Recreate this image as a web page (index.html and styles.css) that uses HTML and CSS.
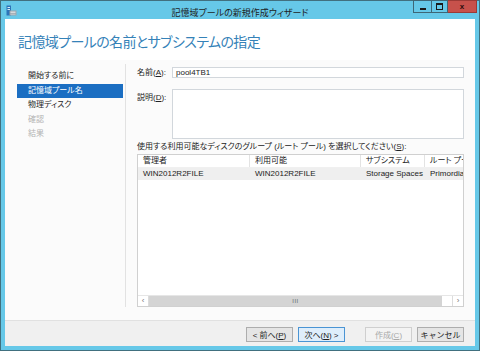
FILE: index.html
```html
<!DOCTYPE html>
<html lang="ja">
  <head>
    <meta charset="UTF-8">
    <title>記憶域プールの新規作成ウィザード</title>
    <link rel="stylesheet" href="styles.css">
  </head>
  <body>
  <div class="window">
    <div class="titlebar">
      <div class="tb-left">
        <svg class="app-icon" width="11" height="11" viewBox="0 0 11 11">
          <rect x="0.5" y="0.5" width="4.5" height="10" fill="#2c74b8"/>
          <rect x="1.5" y="2" width="2.5" height="1" fill="#d8ecf8"/>
          <rect x="1.5" y="4" width="2.5" height="1" fill="#d8ecf8"/>
          <rect x="3.5" y="5.5" width="7" height="5" fill="#9aa6ae"/>
          <rect x="4.5" y="6.5" width="5" height="1.5" fill="#d4dadd"/>
          <rect x="4.5" y="8.7" width="5" height="1" fill="#c2cacf"/>
        </svg>
      </div>
      <div class="tb-title">記憶域プールの新規作成ウィザード</div>
      <div class="tb-buttons">
        <span class="tb-btn tb-min"><i></i></span>
        <span class="tb-btn tb-max"><i></i></span>
        <span class="tb-btn tb-close">x</span>
      </div>
    </div>

    <div class="client">
      <div class="page-head">
        <h1>記憶域プールの名前とサブシステムの指定</h1>
      </div>

      <div class="page-body">
        <ul class="steps">
          <li>開始する前に</li>
          <li class="current">記憶域プール名</li>
          <li>物理ディスク</li>
          <li class="disabled">確認</li>
          <li class="disabled">結果</li>
        </ul>

        <div class="form">
          <div class="field">
            <label>名前(<u>A</u>):</label>
            <div class="textbox">pool4TB1</div>
          </div>
          <div class="field">
            <label>説明(<u>D</u>):</label>
            <div class="textbox textarea"></div>
          </div>
          <div class="list-label">使用する利用可能なディスクのグループ (ルート プール) を選択してください(<u>S</u>):</div>
          <div class="listview">
            <div class="lv-row lv-head">
              <span class="c1">管理者</span>
              <span class="c2">利用可能</span>
              <span class="c3">サブシステム</span>
              <span class="c4">ルート プール</span>
            </div>
            <div class="lv-row lv-item">
              <span class="c1">WIN2012R2FILE</span>
              <span class="c2">WIN2012R2FILE</span>
              <span class="c3">Storage Spaces</span>
              <span class="c4">Primordial</span>
            </div>
            <div class="lv-fill"></div>
            <div class="hscroll">
              <span class="sb-arrow">&lsaquo;</span>
              <span class="sb-thumb">III</span>
              <span class="sb-track"></span>
              <span class="sb-arrow">&rsaquo;</span>
            </div>
          </div>
        </div>
      </div>

      <div class="page-foot">
        <button class="btn">&lt; 前へ(<u>P</u>)</button>
        <button class="btn btn-default">次へ(<u>N</u>) &gt;</button>
        <button class="btn btn-create" disabled>作成(<u>C</u>)</button>
        <button class="btn">キャンセル</button>
      </div>
    </div>
  </div>
  </body>
</html>
```

FILE: styles.css
```css
html, body {
  height: 100%;
  margin: 0;
}
body {
  font-family: "Liberation Sans", "Noto Sans CJK JP", sans-serif;
  font-size: 8px;
  color: #222;
  font-feature-settings: "palt";
}
.window {
  height: 351px;
  box-sizing: border-box;
  border: 1px solid #41707f;
  background-color: #66c8e8;
  display: flex;
  flex-direction: column;
  padding: 0 4px 4px 4px;
}

/* タイトルバー */
.titlebar {
  height: 18px;
  display: grid;
  grid-template-columns: 1fr auto 1fr;
  align-items: start;
}
.app-icon {
  display: block;
  margin: 4px 0 0 1px;
}
.tb-title {
  padding-top: 5px;
  font-size: 9px;
  color: #1e1e1e;
}
.tb-buttons {
  justify-self: end;
  display: flex;
  margin-top: -1px;
  margin-right: -2px;
}
.tb-btn {
  height: 13px;
  box-sizing: border-box;
  border: 1px solid #3e6676;
  display: flex;
  align-items: center;
  justify-content: center;
}
.tb-min {
  width: 18px;
  border-right: 0;
}
.tb-min i {
  width: 6px;
  height: 2px;
  margin-top: 4px;
  background: #1a1a1a;
}
.tb-max {
  width: 17px;
}
.tb-max i {
  width: 5px;
  height: 4px;
  border: 1px solid #1a1a1a;
  border-top-width: 2px;
}
.tb-close {
  width: 29px;
  border: 1px solid #9c3a36;
  border-left: 0;
  background: #c7514b;
  color: #2a0d0c;
  font-weight: bold;
  font-size: 8px;
}

/* 本体 */
.client {
  flex: 1;
  background: #fbfbfb;
  display: flex;
  flex-direction: column;
  min-height: 0;
}
.page-head {
  height: 41px;
  background: #fff;
  padding-left: 13px;
  display: flex;
  align-items: center;
}
.page-head h1 {
  margin: 3px 0 0 0;
  font-size: 14px;
  font-weight: 400;
  color: #3582b8;
  letter-spacing: -0.6px;
}
.page-body {
  flex: 1;
  display: flex;
  min-height: 0;
}

/* 左のステップ */
.steps {
  list-style: none;
  flex-shrink: 0;
  width: 121px;
  box-sizing: border-box;
  margin: 4px 0 13px 0;
  padding: 5px 2px 0 12px;
  border-right: 1px solid #e2e2e2;
}
.steps li {
  height: 14.5px;
  line-height: 14.5px;
  padding-left: 11px;
  color: #262626;
}
.steps li.current {
  background: #1b6ec2;
  color: #fff;
}
.steps li.disabled {
  color: #b4b4b4;
}

/* 右のフォーム */
.form {
  flex: 1;
  min-width: 0;
  padding: 7px 11px 13px 11px;
  display: flex;
  flex-direction: column;
}
.field {
  display: flex;
  margin-bottom: 11px;
}
.field label {
  width: 35px;
  line-height: 11px;
}
.textbox {
  flex: 1;
  height: 11px;
  box-sizing: border-box;
  border: 1px solid #d2d7dc;
  background: #fff;
  padding-left: 3px;
  line-height: 9px;
}
.textarea {
  height: 50px;
}
.field:nth-child(2) {
  margin-bottom: 2px;
}
.field:nth-child(2) label {
  padding-top: 3px;
}
.list-label {
  line-height: 12px;
  margin-bottom: 1px;
}

/* 一覧 */
.listview {
  flex: 1;
  border: 1px solid #d0d0d0;
  background: #fff;
  display: flex;
  flex-direction: column;
  overflow: hidden;
}
.lv-row {
  display: flex;
  white-space: nowrap;
}
.lv-row span {
  flex-shrink: 0;
  padding-left: 5px;
  box-sizing: border-box;
  overflow: hidden;
}
.lv-head {
  height: 12px;
  line-height: 12px;
  border-bottom: 1px solid #f0f0f0;
}
.lv-head span {
  border-right: 1px solid #e3e3e3;
}
.lv-item {
  height: 12px;
  line-height: 12px;
  background: #efefef;
}
.lv-row .c1 { width: 112px; }
.lv-row .c2 { width: 111px; }
.lv-row .c3 { width: 64px; }
.lv-row .c4 { flex: 1 1 0; min-width: 0; border-right: 0; }
.lv-fill {
  flex: 1;
}
.hscroll {
  height: 10px;
  display: flex;
  border-top: 1px solid #e6e6e6;
  color: #777;
}
.sb-arrow {
  width: 11px;
  font-size: 8px;
  line-height: 9px;
  text-align: center;
  border: 1px solid #dcdcdc;
  border-width: 0 1px;
  box-sizing: border-box;
}
.sb-arrow:first-child {
  border-left: 0;
}
.sb-arrow:last-child {
  border-right: 0;
}
.sb-thumb {
  width: 293px;
  background: #d4d4d4;
  text-align: center;
  font-size: 6px;
  line-height: 10px;
  letter-spacing: 0.5px;
  color: #666;
}
.sb-track {
  flex: 1;
}

/* 下のボタン */
.page-foot {
  height: 26px;
  box-sizing: border-box;
  background: #f0f0f0;
  border-top: 1px solid #e1e1e1;
  display: flex;
  justify-content: flex-end;
  align-items: flex-start;
  padding: 6px 11px 0 0;
  gap: 5px;
}
.btn {
  width: 47px;
  height: 15px;
  padding: 0;
  font-family: inherit;
  font-size: 8px;
  color: #222;
  background: #e5e5e5;
  border: 1px solid #adadad;
}
.btn-default {
  background: #dfeefb;
  border-color: #4a94d4;
}
.btn-create {
  margin-left: 15px;
  color: #a8a8a8;
  background: #f3f3f3;
  border-color: #cfcfcf;
}
```
